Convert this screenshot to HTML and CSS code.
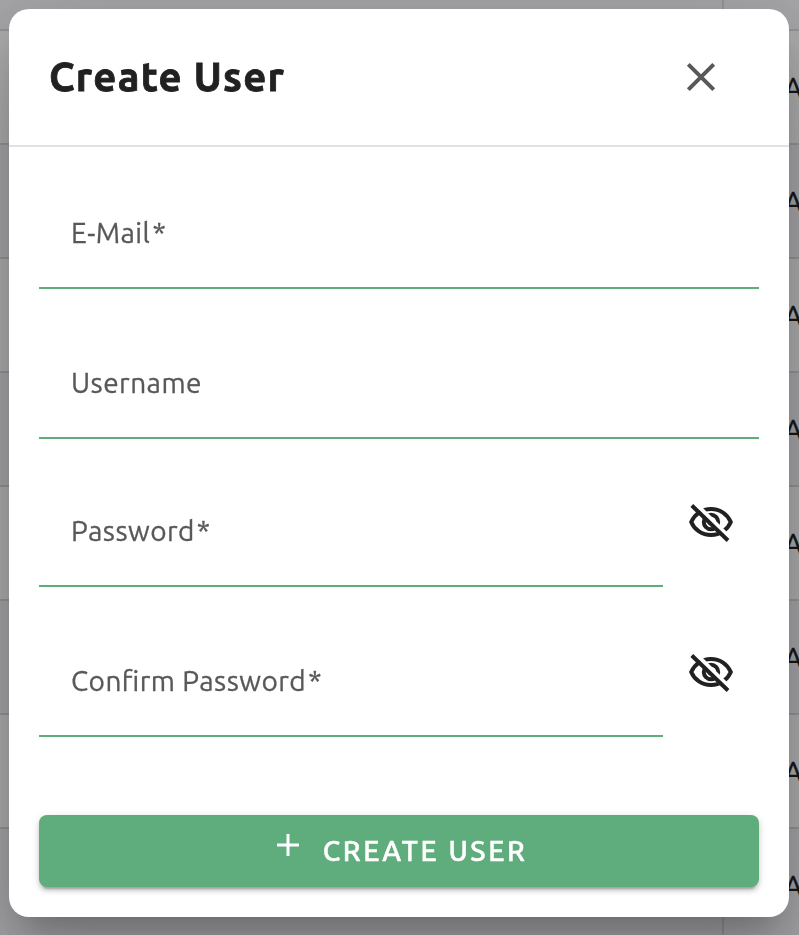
FILE: index.html
```html
<!DOCTYPE html>
<html lang="en">
<head>
    <meta charset="UTF-8">
    <meta name="viewport" content="width=device-width, initial-scale=1.0">
    <title>Create User</title>
    <link rel="stylesheet" href="styles.css">
</head>
<body>

    <!-- User table behind the dialog -->
    <div class="table">
        <div class="row row-head"><div class="cell"></div><div class="cell"></div></div>
        <div class="row"><div class="cell"></div><div class="cell">A</div></div>
        <div class="row"><div class="cell"></div><div class="cell">A</div></div>
        <div class="row"><div class="cell"></div><div class="cell">A</div></div>
        <div class="row"><div class="cell"></div><div class="cell">A</div></div>
        <div class="row"><div class="cell"></div><div class="cell">A</div></div>
        <div class="row"><div class="cell"></div><div class="cell">A</div></div>
        <div class="row"><div class="cell"></div><div class="cell">A</div></div>
        <div class="row"><div class="cell"></div><div class="cell">A</div></div>
    </div>

    <!-- Dialog -->
    <div class="overlay">
        <div class="dialog">
            <header>
                <h1>Create User</h1>
                <button type="button" class="icon-btn" aria-label="Close">
                    <svg class="close" viewBox="0 0 32 32"><path d="M3.3 3.3L28.7 28.7M28.7 3.3L3.3 28.7"/></svg>
                </button>
            </header>
            <form>
                <div class="form-group">
                    <label class="field">E-Mail<span class="required">*</span></label>
                </div>
                <div class="form-group">
                    <label class="field">Username</label>
                </div>
                <div class="form-group form-group-password">
                    <label class="field">Password<span class="required">*</span></label>
                    <button type="button" class="icon-btn" aria-label="Show password">
                        <svg class="eye" viewBox="0 0 48 48"><use href="#eye-off"/></svg>
                    </button>
                </div>
                <div class="form-group">
                    <label class="field">Confirm Password<span class="required">*</span></label>
                    <button type="button" class="icon-btn" aria-label="Show password">
                        <svg class="eye" viewBox="0 0 48 48"><use href="#eye-off"/></svg>
                    </button>
                </div>
                <button type="button" class="btn">
                    <svg class="plus" viewBox="0 0 22 22"><path d="M11 0V22M0 11H22"/></svg>
                    <span>CREATE USER</span>
                </button>
            </form>
        </div>
    </div>

    <svg class="sprite">
        <symbol id="eye-off" viewBox="0 0 48 48">
            <path d="M4.2 24C7.5 16.2 15 11 24 11S40.5 16.2 43.8 24C40.5 31.8 33 37 24 37S7.5 31.8 4.2 24Z"/>
            <circle cx="24" cy="24" r="7.2"/>
            <circle class="pupil" cx="24" cy="24" r="3.3"/>
            <path class="gap" d="M7.5 4.5L44.5 41.5"/>
            <path d="M4.8 7.5L41 42.5"/>
        </symbol>
    </svg>

</body>
</html>
```
FILE: styles.css
```css
/* Global Reset */
* { margin: 0; padding: 0; box-sizing: border-box; }

body {
    font-family: Ubuntu, "Noto Sans", sans-serif;
    color: #212121;
    height: 100vh;
    overflow: hidden;
}

/* Table */
.row {
    display: flex;
    height: 114px;
    border-bottom: 2px solid #dadae0;
    background: #fff;
}

.row-head { height: 31px; }

.row:nth-child(odd) { background: #f4f4f8; }

.cell {
    flex: 1;
    padding-left: 60px;
    font-size: 28px;
    line-height: 114px;
    -webkit-text-stroke: 0.4px;
}

.cell:first-child {
    flex: 0 0 724px;
    border-right: 2px solid #dadae0;
}

/* Dialog */
.overlay {
    position: fixed;
    inset: 0;
    padding: 9px 10px 18px 9px;
    background: rgba(0, 0, 0, 0.32);
}

.dialog {
    height: 908px;
    background: #fff;
    border-radius: 20px;
    box-shadow: 0 22px 30px -14px rgba(0, 0, 0, 0.2),
        0 48px 76px 6px rgba(0, 0, 0, 0.14),
        0 18px 92px 16px rgba(0, 0, 0, 0.12);
}

header {
    display: flex;
    justify-content: space-between;
    align-items: center;
    height: 138px;
    padding: 0 72px 0 40px;
    border-bottom: 2px solid #e0e0e5;
}

h1 {
    padding-bottom: 1px;
    font-size: 40px;
    letter-spacing: 1.3px;
    -webkit-text-stroke: 0.8px;
}

.icon-btn {
    display: flex;
    border: none;
    background: none;
}

.close {
    width: 32px;
    height: 32px;
    fill: none;
    stroke: #585858;
    stroke-width: 4;
}

/* Form */
form { padding: 32px 30px 30px; }

.form-group {
    display: flex;
    height: 110px;
    margin-bottom: 40px;
}

.form-group-password { margin-top: -2px; }

.field {
    flex: 1;
    padding: 34px 32px 0;
    border-bottom: 2px solid #5fad7c;
    color: #585858;
    font-size: 28px;
    line-height: 40px;
    letter-spacing: 0.45px;
    font-feature-settings: "liga" 1;
    -webkit-text-stroke: 0.3px;
}

.required { margin-left: 2px; }

.form-group .icon-btn {
    align-items: flex-start;
    padding: 21px 24px 0;
}

.eye {
    width: 48px;
    height: 48px;
    fill: none;
    stroke: #212121;
    stroke-width: 4;
}

.pupil {
    fill: #212121;
    stroke: none;
}

.gap { stroke: #fff; }

.btn {
    display: flex;
    justify-content: center;
    align-items: center;
    gap: 24px;
    width: 100%;
    height: 72px;
    margin-top: 78px;
    padding-left: 6px;
    border: none;
    border-radius: 8px;
    background: #5fad7c;
    color: #fff;
    font: 500 28px/72px Ubuntu, "Noto Sans", sans-serif;
    letter-spacing: 2.6px;
    -webkit-text-stroke: 0.5px;
    box-shadow: 0 6px 2px -4px rgba(0, 0, 0, 0.2),
        0 4px 4px 0 rgba(0, 0, 0, 0.14),
        0 2px 10px 0 rgba(0, 0, 0, 0.12);
}

.plus {
    width: 22px;
    height: 22px;
    margin-bottom: 12px;
    fill: none;
    stroke: #fff;
    stroke-width: 3;
}

.sprite { display: none; }
```
